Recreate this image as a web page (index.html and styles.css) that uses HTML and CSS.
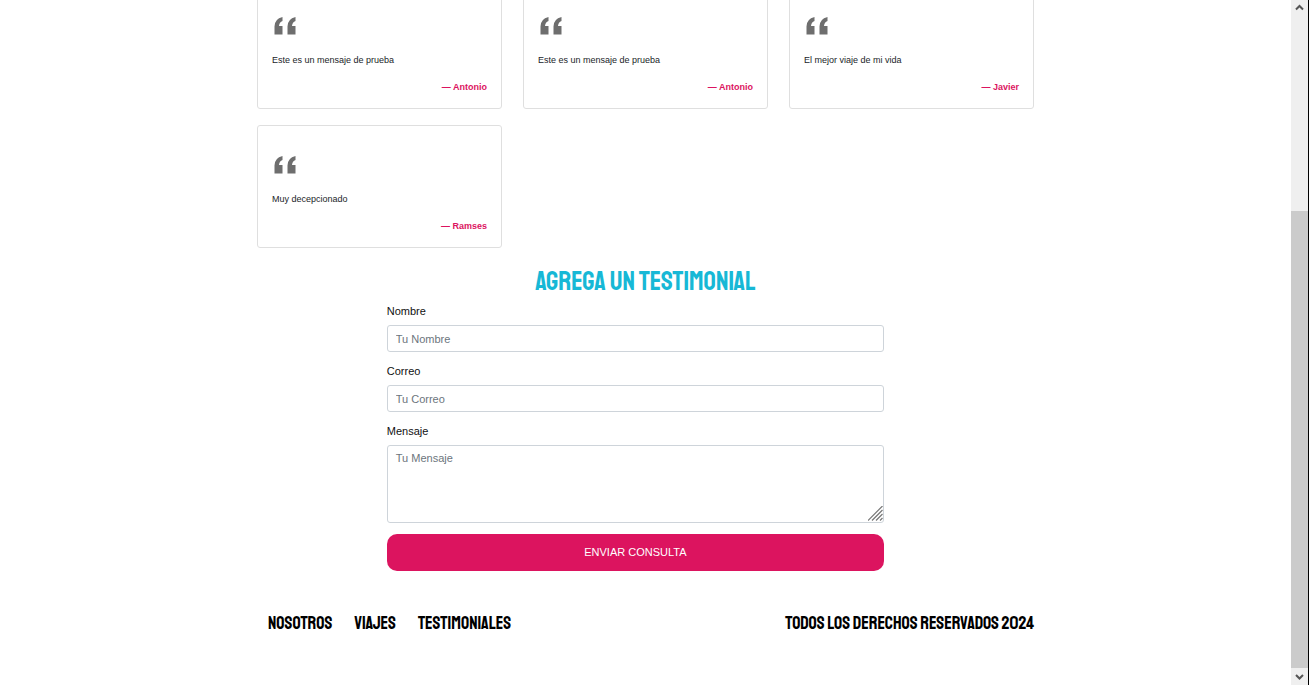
FILE: index.html
```html
<!DOCTYPE html>
<html lang="es">
<head>
<meta charset="utf-8">
<meta name="viewport" content="width=device-width, initial-scale=1">
<title>Testimoniales</title>
<link rel="stylesheet" href="styles.css">
</head>
<body>
<svg class="sprite" aria-hidden="true">
  <symbol id="quote" viewBox="0 0 22 18">
    <path d="M8.5 0 V4 Q5.4 5 5 9 H8.5 V17.5 H0.5 V9.5 Q0.5 2 8.5 0Z"/>
    <path d="M21.5 0 V4 Q18.4 5 18 9 H21.5 V17.5 H13.5 V9.5 Q13.5 2 21.5 0Z"/>
  </symbol>
</svg>
<div class="page">
  <main class="container">
    <section class="testimonials">
      <blockquote class="card">
        <svg class="quote"><use href="#quote"/></svg>
        <p class="message">Este es un mensaje de prueba</p>
        <footer class="author">— Antonio</footer>
      </blockquote>
      <blockquote class="card">
        <svg class="quote"><use href="#quote"/></svg>
        <p class="message">Este es un mensaje de prueba</p>
        <footer class="author">— Antonio</footer>
      </blockquote>
      <blockquote class="card">
        <svg class="quote"><use href="#quote"/></svg>
        <p class="message">El mejor viaje de mi vida</p>
        <footer class="author">— Javier</footer>
      </blockquote>
      <blockquote class="card">
        <svg class="quote"><use href="#quote"/></svg>
        <p class="message">Muy decepcionado</p>
        <footer class="author">— Ramses</footer>
      </blockquote>
    </section>
    <h2 class="title">AGREGA UN TESTIMONIAL</h2>
    <form class="form">
      <div class="field">
        <label for="nombre">Nombre</label>
        <input class="control" id="nombre" type="text" placeholder="Tu Nombre">
      </div>
      <div class="field">
        <label for="correo">Correo</label>
        <input class="control" id="correo" type="email" placeholder="Tu Correo">
      </div>
      <div class="field">
        <label for="mensaje">Mensaje</label>
        <div class="area">
          <textarea class="control message-box" id="mensaje" placeholder="Tu Mensaje"></textarea>
          <svg class="grip" viewBox="0 0 15 15" aria-hidden="true"><path d="M0 14.5 L14.5 0 M4 14.5 L14.5 4 M8 14.5 L14.5 8 M12 14.5 L14.5 12"/></svg>
        </div>
      </div>
      <button class="submit" type="button">ENVIAR CONSULTA</button>
    </form>
    <footer class="site-footer">
      <nav class="links">
        <a href="#nosotros">NOSOTROS</a>
        <a href="#viajes">VIAJES</a>
        <a href="#testimoniales">TESTIMONIALES</a>
      </nav>
      <p class="rights">TODOS LOS DERECHOS RESERVADOS 2024</p>
    </footer>
  </main>
</div>
<div class="scrollbar" aria-hidden="true">
  <svg class="arrow" viewBox="0 0 17 17"><path d="M5 9.5 L8.5 6 L12 9.5"/></svg>
  <div class="track"><div class="thumb"></div></div>
  <svg class="arrow" viewBox="0 0 17 17"><path d="M5 7 L8.5 10.5 L12 7"/></svg>
</div>
</body>
</html>
```
FILE: styles.css
```css
* { box-sizing: border-box; }

body {
  margin: 0;
  display: flex;
  height: 100vh;
  overflow: hidden;
  background: #fff;
  color: #212529;
  font-family: "Liberation Sans", Arial, sans-serif;
  font-size: 11px;
  line-height: 16px;
}

.sprite { position: absolute; width: 0; height: 0; }

.page { flex: 1; min-width: 0; overflow: hidden; }

.container { max-width: 777px; margin: 0 auto; }

.testimonials {
  display: grid;
  grid-template-columns: repeat(3, 1fr);
  gap: 16px 21px;
  margin-top: -14px;
}

.card {
  margin: 0;
  padding: 29px 14px 13px;
  border: 1px solid #dfdfdf;
  border-radius: 3px;
  font-size: 9px;
}

.quote { display: block; width: 22px; height: 18px; margin: 1px 0 17px 2px; fill: #6e6e6e; }

.message { margin: 0 0 11px; }

.author { color: #dc145f; font-weight: bold; text-align: right; }

.title {
  margin: 18px 0 7px;
  color: #17b8d6;
  font-family: Staatliches, Roboto, "Liberation Sans", sans-serif;
  font-size: 27px;
  font-weight: 400;
  line-height: 30px;
  text-align: center;
}

.form {
  display: flex;
  flex-direction: column;
  width: 64%;
  margin-left: 16.7%;
}

.field { display: flex; flex-direction: column; gap: 6px; margin-bottom: 11px; }

label { color: #111; }

.control {
  width: 100%;
  height: 27px;
  padding: 4px 8px;
  border: 1px solid #ced4da;
  border-radius: 3px;
  background: #fff;
  color: #495057;
  font: inherit;
}

.control::placeholder { color: #6c757d; opacity: 1; }

.area { display: grid; position: relative; }

.message-box { height: 78px; resize: none; }

.grip {
  position: absolute;
  right: 1px;
  bottom: 2px;
  width: 15px;
  height: 15px;
  fill: none;
  stroke: #777;
  stroke-width: 1.2;
}

.submit {
  padding: 10px;
  border: 0;
  border-radius: 10px;
  background: #dc145f;
  color: #fff;
  font: inherit;
  line-height: 17px;
}

.site-footer {
  display: flex;
  justify-content: space-between;
  margin-top: 41px;
  padding-left: 11px;
  color: #000;
  font-family: Staatliches, Roboto, "Liberation Sans", sans-serif;
  font-size: 18px;
  font-weight: 400;
  line-height: 22px;
}

.links { display: flex; gap: 22px; }

.links a { color: inherit; text-decoration: none; }

.rights { margin: 0; }

.scrollbar {
  display: flex;
  flex-direction: column;
  width: 18px;
  border-right: 1px solid #000;
  background: #efefef;
}

.arrow { width: 17px; height: 17px; fill: none; stroke: #555; stroke-width: 2; }

.track { display: flex; flex: 1; flex-direction: column; justify-content: flex-end; }

.thumb { height: 70.2%; background: #cbcbcb; }
```
